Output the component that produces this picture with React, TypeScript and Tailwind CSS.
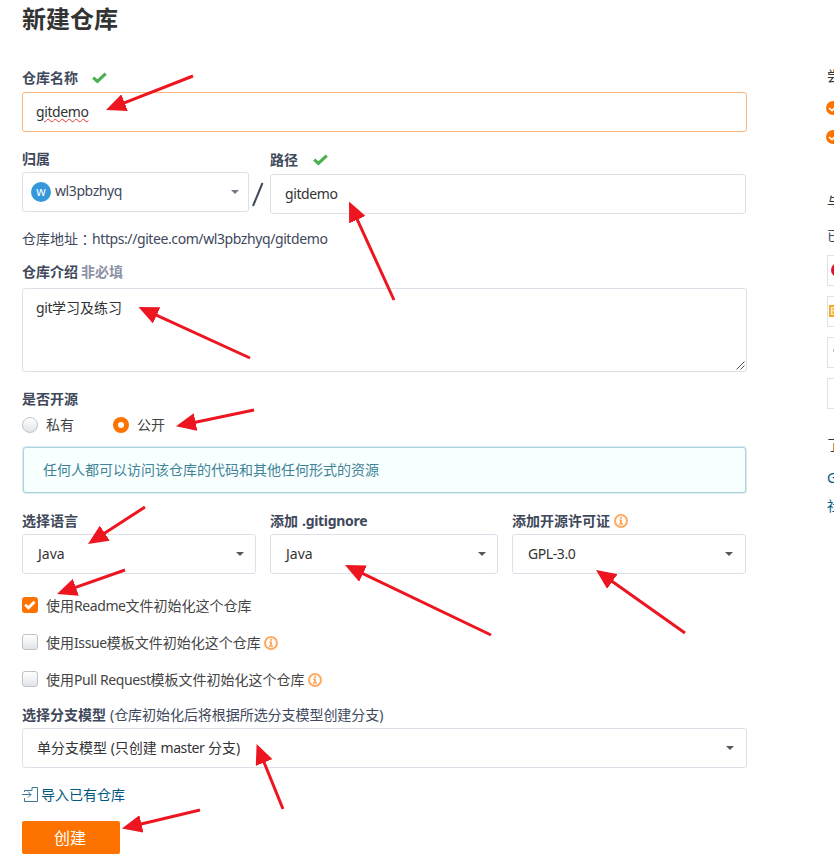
import type { ReactNode } from "react";

interface SelectBoxProps {
  children: ReactNode;
  className?: string;
}

interface CheckRowProps {
  children: ReactNode;
  checked?: boolean;
  info?: boolean;
}

// [tail x, tail y, tip x, tip y]
const arrows = [
  [193, 76, 106, 110],
  [394, 300, 349, 201.5],
  [250, 358, 138.5, 307],
  [254, 410, 176, 426.2],
  [145, 507, 88, 544],
  [125, 570, 57, 594],
  [491, 635, 345, 565],
  [685, 633, 596, 570],
  [283, 809, 256.6, 744],
  [200, 810, 122, 828.5],
];

function CheckMark({ className = "" }: { className?: string }) {
  return (
    <svg width="15" height="12" viewBox="0 0 15 12" className={className}>
      <path d="M1.2 5.6 L5.4 9.4 L13.7 1.6" fill="none" stroke="#4caf50" strokeWidth="3.2" />
    </svg>
  );
}

function InfoIcon({ className = "ml-1" }: { className?: string }) {
  return (
    <svg width="14" height="14" viewBox="0 0 14 14" className={`shrink-0 ${className}`}>
      <circle cx="7" cy="7" r="6" fill="none" stroke="#ffaa60" strokeWidth="2" />
      <path d="M6 3h2v1.7H6zM5.2 5.6H8v3.7h1v1.4H5V9.3h1V7h-.8z" fill="#ffaa60" />
    </svg>
  );
}

function Caret({ color = "#54575c" }: { color?: string }) {
  return (
    <svg width="8" height="4" viewBox="0 0 8 4">
      <path d="M0 0h8L4 4z" fill={color} />
    </svg>
  );
}

function Latin({ children }: { children: ReactNode }) {
  return <span className="tracking-[-0.41px]">{children}</span>;
}

function Label({ children, className = "" }: { children: ReactNode; className?: string }) {
  return <div className={`flex items-center font-bold text-[#40485b] ${className}`}>{children}</div>;
}

function SelectBox({ children, className = "pr-[11px] pl-3.5" }: SelectBoxProps) {
  return (
    <div
      className={`flex h-10 items-center justify-between rounded-[3px] border border-[#dce0e8] text-[#333] ${className}`}
    >
      <span>{children}</span>
      <Caret />
    </div>
  );
}

function CheckRow({ children, checked = false, info = false }: CheckRowProps) {
  return (
    <div className="flex h-[37px] items-center">
      {checked ? (
        <span className="mb-0.5 flex size-4 items-center justify-center rounded-[3px] bg-[#fe7300]">
          <svg width="12" height="10" viewBox="0 0 12 10">
            <path d="M1.2 4.8 L4.5 7.8 L10.6 1.8" fill="none" stroke="#fff" strokeWidth="2.8" />
          </svg>
        </span>
      ) : (
        <span className="mb-0.5 size-4 rounded-[3px] border border-[#bfc3c9] bg-linear-to-b from-white to-[#e1e4e8]" />
      )}
      <span className="ml-2 text-[#444]">{children}</span>
      {info && <InfoIcon className="ml-[3px]" />}
    </div>
  );
}

function SideCheck() {
  return (
    <svg width="14" height="14" viewBox="0 0 14 14" className="-ml-px shrink-0">
      <circle cx="7" cy="7" r="7" fill="#fe7300" />
      <path d="M3 7 L6 9.6 L11 4.6" fill="none" stroke="#fff" strokeWidth="1.6" />
    </svg>
  );
}

function Sidebar() {
  return (
    <aside className="ml-[79px] w-2 shrink-0 overflow-hidden pt-[62px] pl-px whitespace-nowrap text-[#333]">
      <div className="flex h-7 items-center">尝试</div>
      <div className="mt-[3px] flex h-[29px] items-center">
        <SideCheck />
      </div>
      <div className="flex h-[29px] items-center">
        <SideCheck />
      </div>
      <div className="mt-[37px] flex h-7 items-center">与</div>
      <div className="mt-1 flex h-[35px] items-center pb-1 text-[#40485b]">已有</div>
      <div className="flex flex-col gap-2.5">
        <div className="flex h-[31px] w-40 items-center border border-[#dce3e8] pb-px pl-[3px]">
          <span className="size-[14px] rounded-full bg-[#e60f28]" />
        </div>
        <div className="flex h-[31px] w-40 items-center border border-[#dce3e8] pb-px pl-px">
          <span className="flex size-3 items-center bg-[#f5a623] pl-px text-[10px] font-bold text-[#ffe9bd]">E</span>
        </div>
        <div className="flex h-[31px] w-40 items-start border border-[#dce3e8] pt-[11px] pl-[5px]">
          <span className="h-[3px] w-2 rounded-full bg-[#8eaac8]" />
        </div>
        <div className="h-[31px] w-40 border border-[#dce3e8]" />
      </div>
      <div className="mt-[22px] flex h-7 items-center">了解</div>
      <div className="mt-[5px] flex h-7 items-center text-[#005980]">Gitee</div>
      <div className="flex h-7 items-center text-[#005980]">社区</div>
    </aside>
  );
}

export default function App() {
  return (
    <div className="relative flex h-[859px] w-[834px] overflow-hidden bg-white pl-[22px] font-['Noto_Sans','Noto_Sans_CJK_SC',sans-serif] text-sm leading-5">
      <main className="w-[725px] shrink-0">
        <h1 className="flex h-[38px] items-center text-2xl font-bold text-[#333]">新建仓库</h1>

        <Label className="mt-[26px] h-7">
          仓库名称
          <CheckMark className="ml-3.5" />
        </Label>
        <div className="flex h-10 items-center rounded-[3px] border border-[#feb67a] px-[13px] text-[#333]">
          <span className="tracking-[-0.41px] underline decoration-[#e33] decoration-wavy decoration-1 underline-offset-1">
            gitdemo
          </span>
        </div>

        <div className="flex">
          <div className="w-[227px]">
            <Label className="mt-[13px] h-[27px]">归属</Label>
            <div className="flex h-10 items-center rounded-[3px] border border-[#dce0e8] pr-[9px] pl-2 text-[#40485b]">
              <span className="flex size-5 items-center justify-center rounded-full bg-[#3498db] text-xs text-white">
                w
              </span>
              <span className="mr-auto ml-1 pb-[3px]">
                <Latin>wl3pbzhyq</Latin>
              </span>
              <Caret color="#71788a" />
            </div>
          </div>
          <svg width="21" height="82" viewBox="0 0 21 82">
            <path d="M4 74 L13.5 51" stroke="#40485b" strokeWidth="2" />
          </svg>
          <div className="flex-1">
            <Label className="mt-[14px] h-7">
              路径
              <CheckMark className="ml-[15px]" />
            </Label>
            <div className="mr-px flex h-10 items-center rounded-[3px] border border-[#dce0e8] px-3.5 text-[#333]">
              <Latin>gitdemo</Latin>
            </div>
          </div>
        </div>

        <div className="mt-[15px] flex h-5 items-center text-[#40485b]">
          仓库地址
          <span className="font-['Noto_Sans_CJK_TC',sans-serif]">：</span>
          <Latin>https://gitee.com/wl3pbzhyq/gitdemo</Latin>
        </div>
        <Label className="mt-[9px] mb-[3px] h-[27px]">
          仓库介绍<span className="ml-[3px] text-[#8c92a4]">非必填</span>
        </Label>
        <div className="relative h-[84px] rounded-[3px] border border-[#dce0e8] px-[13px] pt-[9px] text-[#333]">
          <Latin>git</Latin>学习及练习
          <svg width="9" height="9" viewBox="0 0 9 9" className="absolute right-px bottom-px">
            <path d="M.5 8.5 L8.5 .5 M4.5 8.5 L8.5 4.5" stroke="#555" strokeWidth="1" />
          </svg>
        </div>

        <Label className="mt-[17px] h-5">是否开源</Label>
        <div className="mt-1.5 flex h-5 items-center text-[#444]">
          <span className="size-4 rounded-full border border-[#bfc3c9] bg-linear-to-b from-white to-[#e1e4e8]" />
          <span className="ml-2 w-[67px]">私有</span>
          <span className="flex size-4 items-center justify-center rounded-full bg-[#fe7300]">
            <span className="size-1.5 rounded-full bg-white" />
          </span>
          <span className="ml-2">公开</span>
        </div>
        <div className="mx-px mt-3 flex h-[46px] items-center rounded-[3px] border border-[#a9d5de] bg-[#f8ffff] pl-[19px] text-[#3f8399] shadow-[0_0_0_1px_#dcebf0]">
          任何人都可以访问该仓库的代码和其他任何形式的资源
        </div>

        <div className="mt-3.5 flex gap-3.5">
          <div className="w-[234px]">
            <Label className="h-[27px]">选择语言</Label>
            <SelectBox className="pr-[11px] pl-[15px]">Java</SelectBox>
          </div>
          <div className="w-[228px]">
            <Label className="h-[27px]">
              添加<span className="ml-1 tracking-[-0.3px]">.gitignore</span>
            </Label>
            <SelectBox className="pr-[11px] pl-[15px]">Java</SelectBox>
          </div>
          <div className="w-[234px]">
            <Label className="h-[27px]">
              添加开源许可证
              <InfoIcon />
            </Label>
            <SelectBox className="pr-3 pl-[15px]">
              <Latin>GPL-3.0</Latin>
            </SelectBox>
          </div>
        </div>

        <div className="mt-[13px]">
          <CheckRow checked>
            使用<Latin>Readme</Latin>文件初始化这个仓库
          </CheckRow>
          <CheckRow info>
            使用<Latin>Issue</Latin>模板文件初始化这个仓库
          </CheckRow>
          <CheckRow info>
            使用<Latin>Pull Request</Latin>模板文件初始化这个仓库
          </CheckRow>
        </div>

        <Label className="mt-1 h-[26px]">
          选择分支模型<span className="ml-1 font-normal tracking-[-0.05px]">(仓库初始化后将根据所选分支模型创建分支)</span>
        </Label>
        <SelectBox className="pr-3 pl-3.5">
          单分支模型 (只创建 <Latin>master</Latin> 分支)
        </SelectBox>

        <a className="mt-4 flex h-[22px] items-center text-[#005980]">
          <svg width="16" height="15" viewBox="0 0 16 15" className="mr-[3px] mb-px">
            <path
              d="M2.5 5V3.5h7.5V.5h5.5v14h-13V11 M0 7.5h9 M6 4.5l3 3-3 3"
              fill="none"
              stroke="#3d7896"
              strokeWidth="1"
            />
          </svg>
          导入已有仓库
        </a>
        <button className="mt-[15px] block h-[33px] w-[98px] rounded-[2px] bg-[#fe7300] pr-0.5 text-base text-white">
          创建
        </button>
      </main>

      <Sidebar />

      <svg width="834" height="859" viewBox="0 0 834 859" className="pointer-events-none absolute inset-0">
        <defs>
          <marker id="tip" viewBox="0 0 20 18" refX="20" refY="9" markerWidth="20" markerHeight="18" markerUnits="userSpaceOnUse" orient="auto">
            <path d="M0 0 L20 9 L0 18z" fill="#ed1620" />
          </marker>
        </defs>
        {arrows.map(([x1, y1, x2, y2]) => {
          // stop the shaft inside the head so the tip stays sharp
          const len = Math.hypot(x2 - x1, y2 - y1);
          const k = (len - 10) / len;
          return (
            <g key={`${x1}-${y1}`}>
              <line x1={x1} y1={y1} x2={x1 + (x2 - x1) * k} y2={y1 + (y2 - y1) * k} stroke="#ed1620" strokeWidth="3" />
              <line x1={x1} y1={y1} x2={x2} y2={y2} stroke="none" markerEnd="url(#tip)" />
            </g>
          );
        })}
      </svg>
    </div>
  );
}
